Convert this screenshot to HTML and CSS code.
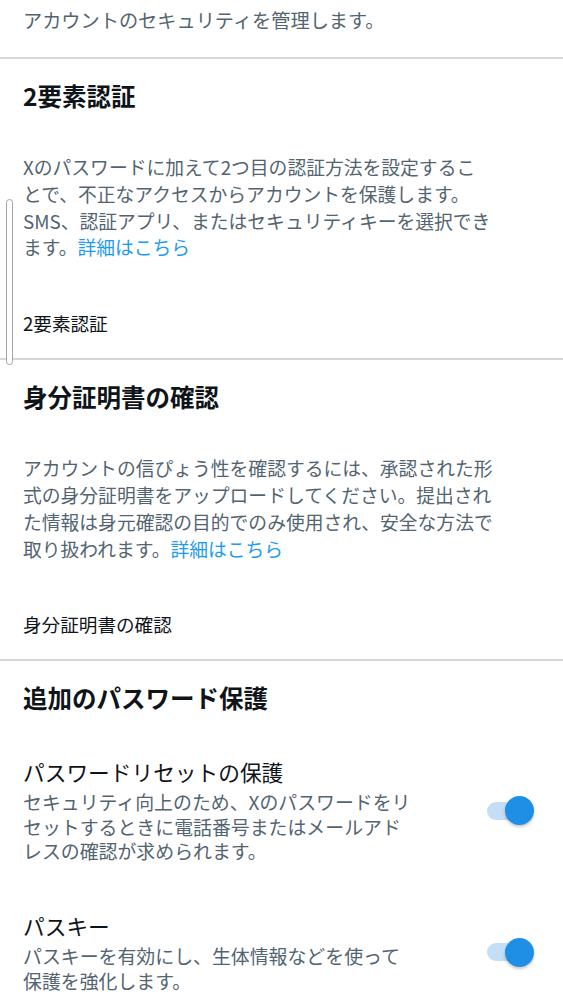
FILE: index.html
```html
<!DOCTYPE html>
<html lang="ja">
<head>
<meta charset="utf-8">
<title>セキュリティ</title>
<link rel="stylesheet" href="styles.css">
</head>
<body>
<div class="page">
  <div class="scrollbar"></div>

  <section class="intro">
    <p class="intro-text">アカウントのセキュリティを管理します。</p>
  </section>

  <section class="block">
    <h2 class="block-title">2要素認証</h2>
    <p class="block-desc">Xのパスワードに加えて2つ目の認証方法を設定するこ<br>とで、不正なアクセスからアカウントを保護します。<br>SMS、認証アプリ、またはセキュリティキーを選択でき<br>ます。<a class="link" href="#">詳細はこちら</a></p>
    <div class="link-row">2要素認証</div>
  </section>

  <section class="block">
    <h2 class="block-title">身分証明書の確認</h2>
    <p class="block-desc">アカウントの信ぴょう性を確認するには、承認された形<br>式の身分証明書をアップロードしてください。提出され<br>た情報は身元確認の目的でのみ使用され、安全な方法で<br>取り扱われます。<a class="link" href="#">詳細はこちら</a></p>
    <div class="link-row">身分証明書の確認</div>
  </section>

  <section class="block block-last">
    <h2 class="block-title">追加のパスワード保護</h2>

    <div class="setting first">
      <div class="setting-text">
        <div class="setting-title">パスワードリセットの保護</div>
        <div class="setting-desc">セキュリティ向上のため、Xのパスワードをリ<br>セットするときに電話番号またはメールアド<br>レスの確認が求められます。</div>
      </div>
      <div class="toggle"><span class="track"></span><span class="thumb"></span></div>
    </div>

    <div class="setting">
      <div class="setting-text">
        <div class="setting-title">パスキー</div>
        <div class="setting-desc">パスキーを有効にし、生体情報などを使って<br>保護を強化します。</div>
      </div>
      <div class="toggle"><span class="track"></span><span class="thumb"></span></div>
    </div>
  </section>
</div>
</body>
</html>
```

FILE: styles.css
```css
* {
  box-sizing: border-box;
}

html, body {
  margin: 0;
  padding: 0;
  background: #ffffff;
}

body {
  font-family: "Noto Sans CJK JP", "Noto Sans", "Liberation Sans", sans-serif;
  color: #0f1419;
  -webkit-font-smoothing: antialiased;
  text-spacing-trim: space-all;
}

.page {
  position: relative;
  width: 563px;
  min-height: 1000px;
  overflow: hidden;
}

.scrollbar {
  position: absolute;
  left: 6px;
  top: 199px;
  width: 7px;
  height: 166px;
  border: 1.5px solid #a3a3a3;
  border-radius: 4px;
  background: #ffffff;
}

section {
  padding: 0 23px;
  border-bottom: 2px solid #d6d6d6;
}

.intro {
  padding-top: 7px;
  padding-bottom: 23px;
}

.intro-text {
  margin: 0;
  font-size: 19.2px;
  line-height: 27px;
  color: #536471;
}

.block {
  padding-top: 21px;
  padding-bottom: 22px;
}

.block-last {
  border-bottom: none;
  padding-bottom: 0;
}

.block-title {
  margin: 0;
  font-size: 24.5px;
  line-height: 32px;
  font-weight: 700;
  color: #0f1419;
}

.block-desc {
  margin: 42px 0 0;
  white-space: nowrap;
  font-size: 18.8px;
  line-height: 26.8px;
  color: #536471;
}

.link {
  color: #1d9bf0;
  text-decoration: none;
}

.link-row {
  margin-top: 48px;
  font-size: 18.6px;
  line-height: 27px;
  color: #0f1419;
}

.setting {
  display: flex;
  align-items: center;
  margin-top: 47.5px;
}

.setting.first {
  margin-top: 43px;
}

.setting-text {
  flex: 1;
  min-width: 0;
}

.setting-title {
  font-size: 21.7px;
  line-height: 30px;
  color: #0f1419;
  margin-bottom: 3px;
}

.setting-desc {
  white-space: nowrap;
  font-size: 18.9px;
  line-height: 24.5px;
  color: #536471;
}

.toggle {
  position: relative;
  flex: none;
  width: 47px;
  height: 29px;
  margin-right: 6px;
  margin-left: 16px;
}

.toggle .track {
  position: absolute;
  left: 0;
  top: 5.5px;
  width: 40px;
  height: 18px;
  border-radius: 9px;
  background: #c3def6;
}

.toggle .thumb {
  position: absolute;
  right: 0;
  top: 0;
  width: 29px;
  height: 29px;
  border-radius: 50%;
  background: #1f8fe5;
  box-shadow: 0 2px 3px rgba(0, 0, 0, 0.22);
}
```
